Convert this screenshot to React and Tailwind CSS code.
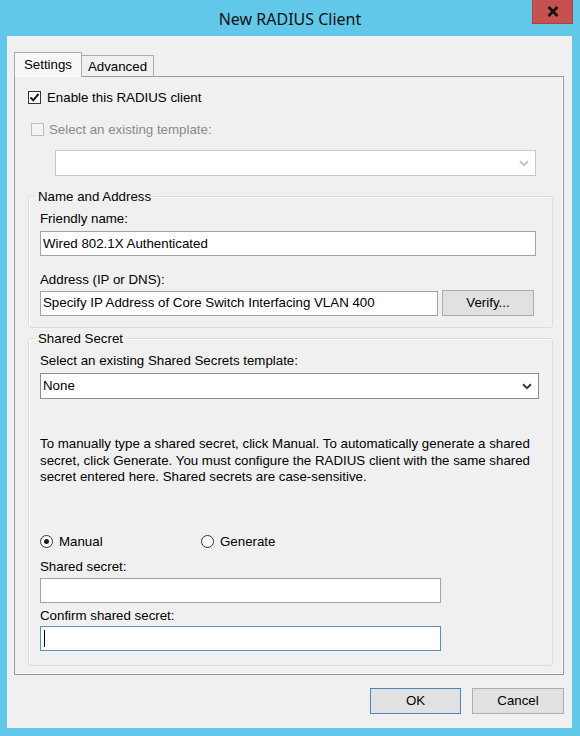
import React from "react";

function Check({ checked, disabled }) {
  return (
    <span
      className={
        "w-[13px] h-[13px] border flex items-center justify-center shrink-0 " +
        (disabled ? "border-[#bcbcbc] bg-[#f4f4f4]" : "border-[#333333] bg-white")
      }
    >
      {checked && (
        <svg width="11" height="11" viewBox="0 0 11 11">
          <path d="M1.5 5.5 L4.2 8.3 L9.5 2" fill="none" stroke="#1a1a1a" strokeWidth="2" />
        </svg>
      )}
    </span>
  );
}

function Radio({ checked }) {
  return (
    <span className="w-[13px] h-[13px] rounded-full border border-[#333333] bg-white flex items-center justify-center shrink-0">
      {checked && <span className="w-[5px] h-[5px] rounded-full bg-[#1a1a1a]" />}
    </span>
  );
}

function Chevron({ color }) {
  return (
    <svg width="10" height="7" viewBox="0 0 10 7">
      <path d="M1 1.2 L5 5.2 L9 1.2" fill="none" stroke={color} strokeWidth="2" />
    </svg>
  );
}

function Input({ className, focused, children }) {
  return (
    <div
      className={
        "h-[25px] bg-white border flex items-center pl-[2px] whitespace-nowrap overflow-hidden " +
        (focused ? "border-[#5b8fc0] " : "border-[#a3a3a3] ") +
        className
      }
    >
      {children}
    </div>
  );
}

function Button({ children, className, isDefault }) {
  return (
    <div
      className={
        "h-[26px] flex items-center justify-center bg-[#e1e1e1] border " +
        (isDefault ? "border-[#4a87c2] " : "border-[#adadad] ") +
        className
      }
    >
      {children}
    </div>
  );
}

function Group({ title, children, className }) {
  return (
    <fieldset
      className={
        "w-[525px] ml-[13px] border border-[#d5dfe5] rounded-[3px] shadow-[inset_1px_1px_0_#ffffff] " +
        className
      }
    >
      <legend className="ml-[7px] px-[2px] leading-[15px]">{title}</legend>
      {children}
    </fieldset>
  );
}

export default function App() {
  return (
    <div className="w-[580px] h-[736px] bg-[#62c8e9] flex flex-col font-['Liberation_Sans',Arial,sans-serif] text-[13.3px] text-black">
      <div className="relative h-[36px] shrink-0 flex items-center justify-center">
        <span className="font-['Noto_Sans',sans-serif] text-[16px] text-[#111111] leading-none mt-[1px]">
          New RADIUS Client
        </span>
        <div className="absolute top-0 right-[7px] w-[41px] h-[24px] bg-[#c75050] border border-[#a84545] border-t-0 flex items-center justify-center">
          <svg width="12" height="11" viewBox="0 0 12 11">
            <path d="M1.5 1 L10.5 10 M10.5 1 L1.5 10" stroke="#111111" strokeWidth="2.6" />
          </svg>
        </div>
      </div>

      <div className="ml-[7px] mr-[8px] mb-[8px] flex-1 bg-[#f0f0f0] flex flex-col pt-[16px] px-[7px]">
        {/* Tabs */}
        <div className="flex items-end h-[24px]">
          <div className="relative z-10 h-[25px] mb-[-1px] w-[68px] bg-[#f8f8f8] border border-b-0 border-[#acacac] flex items-center justify-center pb-[1px]">
            Settings
          </div>
          <div className="h-[21px] w-[73px] ml-[-1px] bg-[#f0f0f0] border border-b-0 border-[#acacac] flex items-center justify-center pt-[2px]">
            Advanced
          </div>
        </div>

        {/* Panel */}
        <div className="w-[550px] border border-[#9a9a9a] shadow-[inset_-1px_-1px_0_#ffffff] bg-[#f0f0f0] pt-[13px] pb-[8px] flex flex-col">
          <div className="flex items-center h-[15px] leading-[15px] ml-[13px]">
            <Check checked />
            <span className="ml-[6px]">Enable this RADIUS client</span>
          </div>
          <div className="flex items-center h-[15px] leading-[15px] ml-[16px] mt-[17px]">
            <Check disabled />
            <span className="ml-[5px] text-[#8a8a8a]">Select an existing template:</span>
          </div>
          <div className="ml-[40px] mt-[13px] w-[481px] h-[26px] bg-white border border-[#c9c9c9] flex items-center justify-end pr-[6px]">
            <Chevron color="#c4c4c4" />
          </div>

          <Group title="Name and Address" className="mt-[13px] pb-[11px]">
            <div className="px-[11px]">
              <div className="mt-[7px] leading-[15px]">Friendly name:</div>
              <Input className="mt-[5px] w-[496px]">Wired 802.1X Authenticated</Input>
              <div className="mt-[16px] leading-[15px]">Address (IP or DNS):</div>
              <div className="mt-[3px] flex items-center">
                <Input className="w-[398px]">Specify IP Address of Core Switch Interfacing VLAN 400</Input>
                <Button className="ml-[4px] w-[92px] bg-[#dddddd]">Verify...</Button>
              </div>
            </div>
          </Group>

          <Group title="Shared Secret" className="mt-[3px] pb-[14px]">
            <div className="px-[11px]">
              <div className="mt-[7px] leading-[15px]">Select an existing Shared Secrets template:</div>
              <div className="mt-[5px] w-[499px] h-[26px] bg-white border border-[#8f8f8f] flex items-center justify-between pl-[2px] pr-[6px]">
                <span>None</span>
                <Chevron color="#3a3a3a" />
              </div>
              <p className="mt-[37px] leading-[16.5px] whitespace-nowrap">
                To manually type a shared secret, click Manual. To automatically generate a shared
                <br />
                secret, click Generate. You must configure the RADIUS client with the same shared
                <br />
                secret entered here. Shared secrets are case-sensitive.
              </p>
              <div className="mt-[48px] flex items-center h-[15px] leading-[15px]">
                <div className="flex items-center w-[161px]">
                  <Radio checked />
                  <span className="ml-[6px]">Manual</span>
                </div>
                <div className="flex items-center">
                  <Radio />
                  <span className="ml-[6px]">Generate</span>
                </div>
              </div>
              <div className="mt-[10px] leading-[15px]">Shared secret:</div>
              <Input className="mt-[4px] w-[401px]" />
              <div className="mt-[5px] leading-[15px]">Confirm shared secret:</div>
              <Input className="mt-[3px] w-[401px]" focused>
                <span className="ml-[1px] w-[1px] h-[17px] bg-black" />
              </Input>
            </div>
          </Group>
        </div>

        {/* Buttons */}
        <div className="mt-[13px] flex justify-end pr-[1px] gap-[11px]">
          <Button isDefault className="w-[91px]">OK</Button>
          <Button className="w-[92px]">Cancel</Button>
        </div>
      </div>
    </div>
  );
}
